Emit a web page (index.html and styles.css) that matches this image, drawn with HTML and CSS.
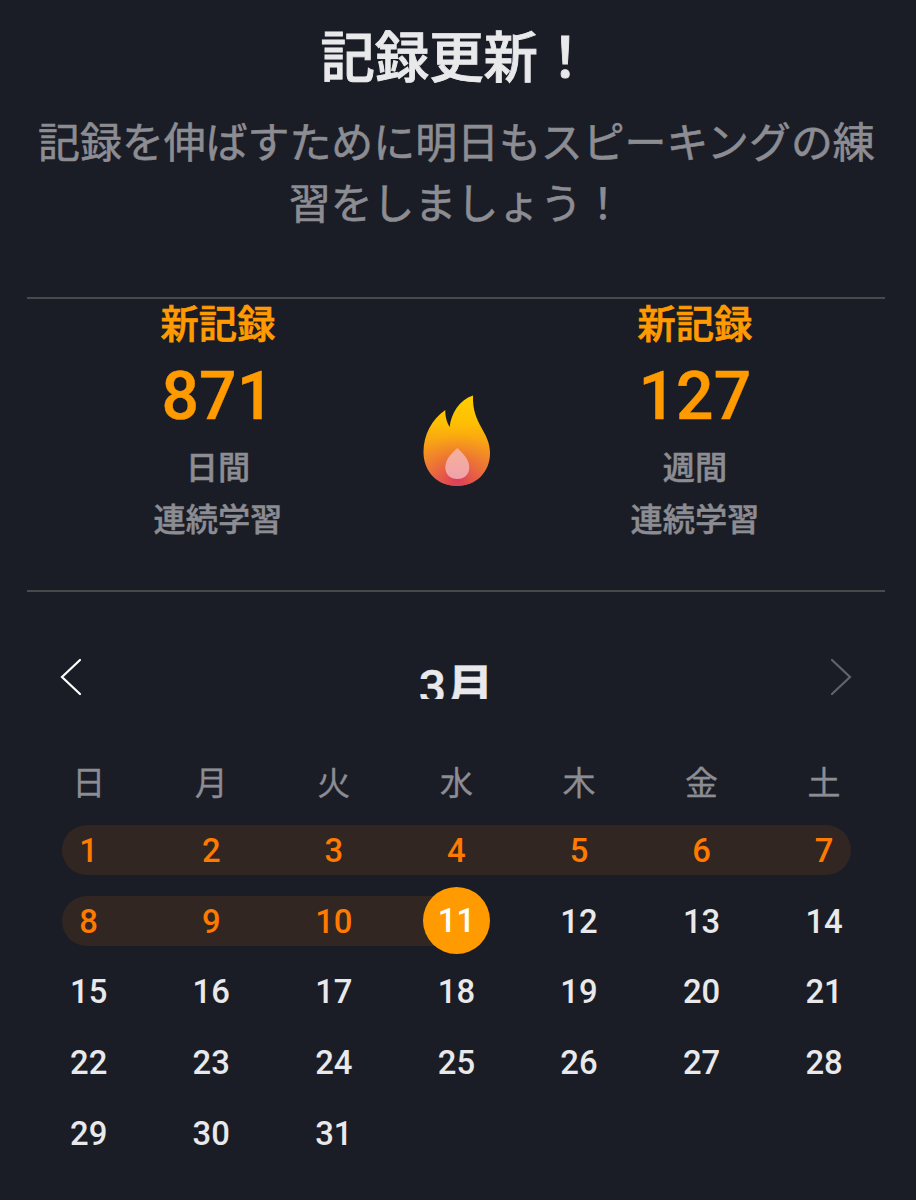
FILE: index.html
```html
<!DOCTYPE html>
<html lang="ja">
<head>
<meta charset="utf-8">
<title>記録更新！</title>
<link rel="stylesheet" href="styles.css">
</head>
<body>
<main class="screen">
  <h1 class="title">記録更新！</h1>
  <p class="lead">記録を伸ばすために明日もスピーキングの練習をしましょう！</p>

  <section class="stats">
    <div class="stat">
      <div class="stat-badge">新記録</div>
      <div class="stat-value">871</div>
      <div class="stat-label">日間<br>連続学習</div>
    </div>
    <svg class="flame" viewBox="0 0 68 92" width="68" height="92" aria-hidden="true">
      <defs>
        <linearGradient id="fire" x1="0" y1="0" x2="0" y2="1">
          <stop offset="0" stop-color="#ffcd00"/>
          <stop offset="0.3" stop-color="#febf03"/>
          <stop offset="0.6" stop-color="#f6981c"/>
          <stop offset="0.85" stop-color="#ee7735"/>
          <stop offset="1" stop-color="#e3504e"/>
        </linearGradient>
        <radialGradient id="glow" gradientUnits="userSpaceOnUse" cx="34" cy="84" r="46">
          <stop offset="0" stop-color="#dc3a5c" stop-opacity="0.95"/>
          <stop offset="1" stop-color="#ee7a30" stop-opacity="0"/>
        </radialGradient>
        <linearGradient id="core" x1="0" y1="0" x2="0" y2="1">
          <stop offset="0" stop-color="#f5b19b"/>
          <stop offset="1" stop-color="#f0a1aa"/>
        </linearGradient>
      </defs>
      <path fill="url(#fire)" d="M50 0.500C36 5 28 19 26.700 32C24 28 22 21 22.300 15C9 24 .5 40 .5 57C.5 77 15 91 34 91C53 91 67 77 67 58C67 36 49 30 50 0.500Z"/>
      <path fill="url(#glow)" d="M50 0.500C36 5 28 19 26.700 32C24 28 22 21 22.300 15C9 24 .5 40 .5 57C.5 77 15 91 34 91C53 91 67 77 67 58C67 36 49 30 50 0.500Z"/>
      <path fill="url(#core)" d="M34.300 53C29 58 22.300 64 22.300 72.500C22.300 79.500 27.600 84 34.300 84C41 84 46.300 79.500 46.300 72.500C46.300 64 39.600 58 34.300 53Z"/>
    </svg>
    <div class="stat">
      <div class="stat-badge">新記録</div>
      <div class="stat-value">127</div>
      <div class="stat-label">週間<br>連続学習</div>
    </div>
  </section>

  <section class="calendar">
    <header class="month-bar">
      <svg class="arrow" viewBox="0 0 22 38" width="22" height="38"><path d="M20 2L2 19L20 36"/></svg>
      <div class="month">3<b>月</b></div>
      <svg class="arrow arrow-off" viewBox="0 0 22 38" width="22" height="38"><path d="M2 2L20 19L2 36"/></svg>
    </header>
    <div class="row weekdays"><span>日</span><span>月</span><span>火</span><span>水</span><span>木</span><span>金</span><span>土</span></div>
    <div class="row streak streak-full"><span>1</span><span>2</span><span>3</span><span>4</span><span>5</span><span>6</span><span>7</span></div>
    <div class="row streak streak-part"><span>8</span><span>9</span><span>10</span><span class="today">11</span><span class="plain">12</span><span class="plain">13</span><span class="plain">14</span></div>
    <div class="row"><span>15</span><span>16</span><span>17</span><span>18</span><span>19</span><span>20</span><span>21</span></div>
    <div class="row"><span>22</span><span>23</span><span>24</span><span>25</span><span>26</span><span>27</span><span>28</span></div>
    <div class="row"><span>29</span><span>30</span><span>31</span></div>
  </section>
</main>
</body>
</html>
```
FILE: styles.css
```css
* { box-sizing: border-box; }

body {
  margin: 0;
  background: #1b1d26;
  color: #e9e9eb;
  font-family: "Noto Sans CJK JP", sans-serif;
  font-weight: 500;
}

.screen {
  height: 1200px;
  padding: 14px 30.600px 0 27.400px;
  overflow: hidden;
}

.title {
  margin: 0;
  font-size: 54.4px;
  font-weight: 500;
  line-height: 80px;
  text-align: center;
  -webkit-text-stroke: 0.9px currentColor;
}

.lead {
  margin: 15px 0 0;
  font-size: 41.9px;
  font-weight: 400;
  line-height: 61px;
  text-align: center;
  color: #8c8c93;
  -webkit-text-stroke: 0.6px currentColor;
}

.stats {
  display: grid;
  grid-template-columns: repeat(3, 238.500px);
  justify-content: center;
  justify-items: center;
  height: 295px;
  margin-top: 66px;
  border-top: 2px solid #48494b;
  border-bottom: 2px solid #48494b;
}

.stat { text-align: center; }

.stat-badge {
  color: #ff9b00;
  font-size: 38.300px;
  line-height: 46px;
  -webkit-text-stroke: 0.7px currentColor;
}

.stat-value {
  margin-top: 14px;
  color: #ff9b00;
  font: 500 66px/76px Roboto, sans-serif;
  -webkit-text-stroke: 0.5px currentColor;
}

.stat-label {
  margin-top: 5px;
  color: #8c8c93;
  font-size: 32.200px;
  line-height: 51.500px;
  -webkit-text-stroke: 0.5px currentColor;
}

.flame { margin: 96px 0 0 1px; }

.month-bar {
  display: flex;
  justify-content: space-between;
  align-items: flex-start;
  height: 100px;
  padding: 0 33px;
  margin-top: 66px;
}

.arrow {
  fill: none;
  stroke: #fff;
  stroke-width: 2.200;
  stroke-linecap: round;
}

.arrow-off { stroke: #62636a; }

.month {
  height: 41px;
  overflow: hidden;
  font-family: Roboto, "Noto Sans CJK JP", sans-serif;
  font-size: 48px;
  line-height: 59px;
  -webkit-text-stroke: 0.4px currentColor;
}

.month b { font-weight: 700; }

.row {
  display: grid;
  grid-template-columns: repeat(7, 1fr);
  align-items: center;
  justify-items: center;
  position: relative;
  height: 70.800px;
  padding-top: 1px;
  font: 500 32.800px/50px Roboto, sans-serif;
}

.weekdays {
  height: 46px;
  margin-bottom: 11px;
  padding: 0;
  color: #8c8c93;
  font: 400 33px/46px "Noto Sans CJK JP", sans-serif;
  -webkit-text-stroke: 0.3px currentColor;
}

.streak { color: #ff7a00; isolation: isolate; }

.streak::before {
  content: "";
  position: absolute;
  z-index: -1;
  left: 34.500px;
  top: 10px;
  height: 50px;
  background: #322622;
}

.streak-full::before { right: 34.500px; border-radius: 25px; }
.streak-part::before { right: 50%; border-radius: 25px 0 0 25px; }

.today {
  width: 67px;
  height: 67px;
  margin-top: -2px;
  border-radius: 50%;
  background: #ff9b00;
  color: #fff;
  line-height: 69px;
  text-align: center;
}

.plain { color: #e9e9eb; }
```
